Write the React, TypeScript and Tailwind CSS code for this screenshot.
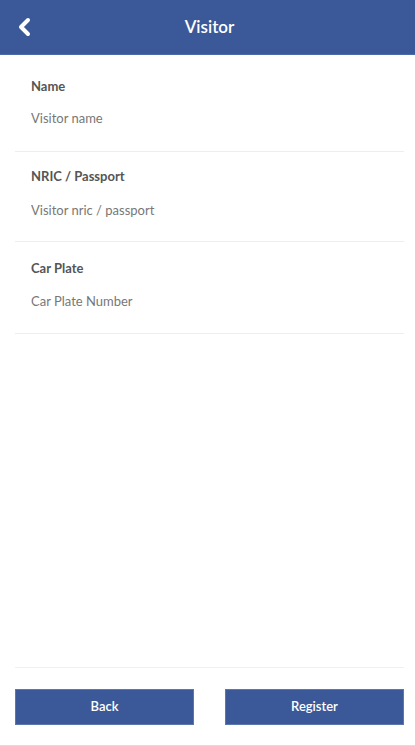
import React from "react";

const font = { fontFamily: '"Source Sans Pro", Lato, "Open Sans", sans-serif' };

function Field({ label, placeholder, cls, gap }: { label: string; placeholder: string; cls: string; gap: string }) {
  return (
    <div className={`ml-[15px] mr-[11px] border-b border-[#eeeeee] px-4 ${cls}`}>
      <div className="text-[13px] font-bold leading-[18px] text-[#555555]">{label}</div>
      <input
        className={`${gap} block w-full bg-transparent text-[13px] leading-[18px] text-[#555] outline-none placeholder:text-[#777777]`}
        placeholder={placeholder}
        style={font}
      />
    </div>
  );
}

export default function App() {
  return (
    <div className="flex h-[746px] w-[415px] flex-col bg-white" style={font}>
      <header className="relative flex h-[55px] shrink-0 items-center justify-center border-b border-[#4a6aa8] bg-[#3b5998]">
        <button className="absolute left-[14px] top-[16px] flex h-[22px] w-[20px] items-center justify-center">
          <svg width="16" height="20" viewBox="0 0 16 20">
            <path d="M12 3 L5 10 L12 17" fill="none" stroke="white" strokeWidth="4" strokeLinecap="round" strokeLinejoin="round" />
          </svg>
        </button>
        <h1 className="ml-[4px] text-[17px] font-semibold text-white">Visitor</h1>
      </header>
      <main className="flex-1">
        <Field label="Name" placeholder="Visitor name" cls="pt-[22px] pb-[24px]" gap="mt-[14px]" />
        <Field label="NRIC / Passport" placeholder="Visitor nric / passport" cls="pt-[15px] pb-[22px]" gap="mt-[16px]" />
        <Field label="Car Plate" placeholder="Car Plate Number" cls="pt-[17px] pb-[23px]" gap="mt-[15px]" />
      </main>
      <footer className="ml-[15px] mr-[11px] flex shrink-0 gap-[31px] border-t border-[#f0f0f0] pt-[21px] pb-[20px]">
        <button className="h-[36px] flex-1 border border-[#5a77b0] bg-[#3b5998] text-[13px] font-semibold text-white">Back</button>
        <button className="h-[36px] flex-1 border border-[#5a77b0] bg-[#3b5998] text-[13px] font-semibold text-white">Register</button>
      </footer>
      <div className="h-[1px] shrink-0 bg-[#dddddd]" />
    </div>
  );
}
